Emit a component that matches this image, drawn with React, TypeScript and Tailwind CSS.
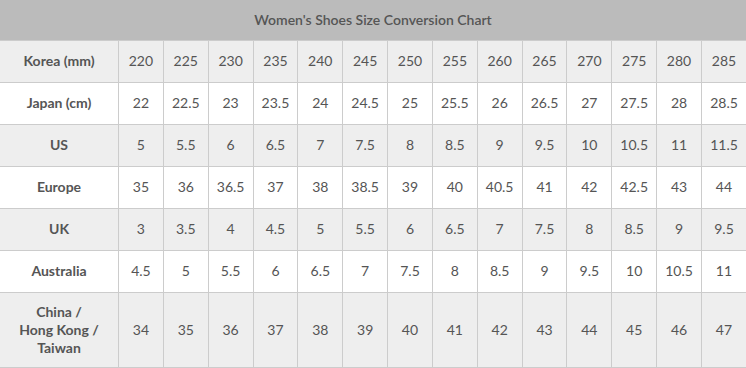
const rows: { label: string[]; values: string[] }[] = [
  { label: ["Korea (mm)"], values: ["220", "225", "230", "235", "240", "245", "250", "255", "260", "265", "270", "275", "280", "285"] },
  { label: ["Japan (cm)"], values: ["22", "22.5", "23", "23.5", "24", "24.5", "25", "25.5", "26", "26.5", "27", "27.5", "28", "28.5"] },
  { label: ["US"], values: ["5", "5.5", "6", "6.5", "7", "7.5", "8", "8.5", "9", "9.5", "10", "10.5", "11", "11.5"] },
  { label: ["Europe"], values: ["35", "36", "36.5", "37", "38", "38.5", "39", "40", "40.5", "41", "42", "42.5", "43", "44"] },
  { label: ["UK"], values: ["3", "3.5", "4", "4.5", "5", "5.5", "6", "6.5", "7", "7.5", "8", "8.5", "9", "9.5"] },
  { label: ["Australia"], values: ["4.5", "5", "5.5", "6", "6.5", "7", "7.5", "8", "8.5", "9", "9.5", "10", "10.5", "11"] },
  { label: ["China /", "Hong Kong /", "Taiwan"], values: ["34", "35", "36", "37", "38", "39", "40", "41", "42", "43", "44", "45", "46", "47"] },
];

export default function App() {
  return (
    <div className="h-[368px] w-[746px] overflow-hidden bg-white font-['Lato','Liberation_Sans',sans-serif] text-[14px] text-[#555]">
      <table className="ml-[-1px] w-[748px] table-fixed border-collapse">
        <colgroup>
          <col className="w-[119px]" />
          {rows[0].values.map((v) => (
            <col key={v} />
          ))}
        </colgroup>
        <thead>
          <tr>
            <th
              colSpan={15}
              className="h-[40px] border-x border-b border-[#ccc] bg-[#bbbbbb] text-center text-[14px] font-semibold text-[#555]"
            >
              Women's Shoes Size Conversion Chart
            </th>
          </tr>
        </thead>
        <tbody>
          {rows.map((row, i) => (
            <tr key={row.label.join(" ")} className={i % 2 === 0 ? "bg-[#eeeeee]" : "bg-white"}>
              <td className="h-[42px] border border-[#ccc] px-1 py-[10px] text-center leading-[18px] font-bold">
                {row.label.map((l) => (
                  <div key={l}>{l}</div>
                ))}
              </td>
              {row.values.map((v, j) => (
                <td key={j} className="h-[42px] border border-[#ccc] p-0 text-center leading-[18px]">
                  {v}
                </td>
              ))}
            </tr>
          ))}
        </tbody>
      </table>
    </div>
  );
}
